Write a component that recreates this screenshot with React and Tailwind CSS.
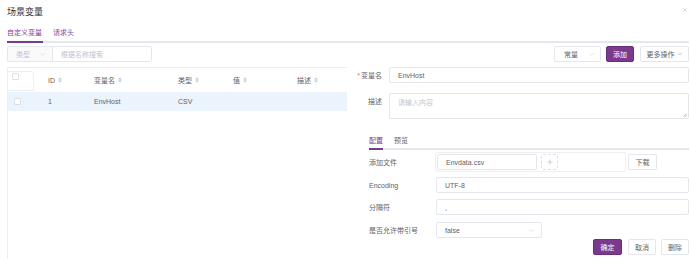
import { ChevronDown, X, Plus } from 'lucide-react'

const purple = 'bg-[#7b3a8d]'

const SortIcon = () => (
  <svg width="4" height="6" viewBox="0 0 4 6" className="ml-[3px] inline-block">
    <path d="M0 2.4 L2 0.4 L4 2.4 Z" fill="#c0c4cc" />
    <path d="M0 3.6 L2 5.6 L4 3.6 Z" fill="#c0c4cc" />
  </svg>
)

const Checkbox = () => (
  <span className="block w-[7px] h-[7px] border border-[#dcdfe6] rounded-[1px] bg-white" />
)

const columns = [
  { key: 'id', label: 'ID', width: 'w-[46px]' },
  { key: 'name', label: '变量名', width: 'w-[84px]' },
  { key: 'type', label: '类型', width: 'w-[55px]' },
  { key: 'value', label: '值', width: 'w-[64px]' },
  { key: 'desc', label: '描述', width: 'flex-1' }
]

const rows = [{ id: '1', name: 'EnvHost', type: 'CSV', value: '', desc: '' }]

const Input = ({ value, placeholder, className = '' }) => (
  <div className={`h-[16px] border border-[#e4e7ed] rounded-[2px] bg-white flex items-center px-[8px] ${className}`}>
    {value ? <span className="text-[#606266]">{value}</span> : <span className="text-[#c0c4cc]">{placeholder}</span>}
  </div>
)

const Btn = ({ children, primary, className = '' }) => (
  <div
    className={`h-[16px] flex items-center justify-center rounded-[2px] ${
      primary ? `${purple} text-white border border-[#6a2f7c]` : 'bg-white border border-[#e4e7ed] text-[#606266]'
    } ${className}`}
  >
    {children}
  </div>
)

export default function App() {
  return (
    <div
      className="w-[690px] h-[259px] bg-white overflow-hidden pl-[7px] pr-[1px] text-[7px] leading-none text-[#606266]"
      style={{ fontFamily: '"Liberation Sans", "Noto Sans CJK SC", sans-serif' }}
    >
      {/* Header */}
      <div className="h-[24px] flex items-center justify-between">
        <span className="text-[9px] text-[#303133]">场景变量</span>
        <X className="w-[6px] h-[6px] mr-[1px] -mt-[4px] text-[#909399]" strokeWidth={1.5} />
      </div>

      {/* Tabs */}
      <div className="h-[19px] flex items-start border-b-2 border-[#e4e7ed]">
        <div className="h-[19px] -mb-[2px] border-b-2 border-[#7b3a8d] flex items-center text-[#7b3a8d] pr-[1px]">
          自定义变量
        </div>
        <div className="h-[17px] flex items-center ml-[10px] text-[#8a4a9c]">请求头</div>
      </div>

      {/* Toolbar */}
      <div className="mt-[3px] h-[16px] flex items-center justify-between">
        <div className="flex h-[16px]">
          <div className="w-[46px] h-[16px] border border-[#e4e7ed] rounded-l-[2px] bg-[#fafafa] flex items-center justify-between pl-[8px] pr-[6px] text-[#c0c4cc]">
            <span>类型</span>
            <ChevronDown className="w-[7px] h-[7px]" strokeWidth={1.5} />
          </div>
          <div className="w-[99px] h-[16px] border border-l-0 border-[#e4e7ed] rounded-r-[2px] flex items-center pl-[8px] text-[#c0c4cc]">
            根据名称搜索
          </div>
        </div>
        <div className="flex items-center">
          <div className="w-[47px] h-[16px] border border-[#e4e7ed] rounded-[2px] flex items-center justify-between pl-[9px] pr-[5px]">
            <span>常量</span>
            <ChevronDown className="w-[7px] h-[7px] text-[#c0c4cc]" strokeWidth={1.5} />
          </div>
          <Btn primary className="w-[28px] ml-[5px]">添加</Btn>
          <div className="w-[49px] ml-[6px] h-[16px] border border-[#e4e7ed] rounded-[2px] flex items-center justify-center gap-[2px]">
            <span>更多操作</span>
            <ChevronDown className="w-[6px] h-[6px]" strokeWidth={1.5} />
          </div>
        </div>
      </div>

      {/* Main */}
      <div className="mt-[5px] flex gap-[8px]">
        {/* Left table */}
        <div className="w-[340px] h-[192px] border-l border-t border-[#ebeef5]">
          <div className="h-[24px] flex items-start">
            <div className="w-[26px] h-[20px] mt-[3px] border border-l-0 border-[#ebeef5] rounded-tr-[3px] pl-[4px] pt-[1px]">
              <Checkbox />
            </div>
            {columns.map(c => (
              <div key={c.key} className={`${c.width} h-[24px] pl-[14px] flex items-center text-[#606266]`}>
                {c.label}
                <SortIcon />
              </div>
            ))}
          </div>
          {rows.map(r => (
            <div key={r.id} className="h-[19px] flex items-center bg-[#ebf4fd]">
              <div className="w-[26px] pl-[6px]">
                <Checkbox />
              </div>
              {columns.map(c => (
                <div key={c.key} className={`${c.width} pl-[14px] text-[#606266]`}>
                  {r[c.key]}
                </div>
              ))}
            </div>
          ))}
        </div>

        {/* Right form */}
        <div className="flex-1">
          <div className="flex items-center">
            <label className="w-[34px] pr-[7px] text-right">
              <span className="text-[#f56c6c] mr-[1px]">*</span>变量名
            </label>
            <Input value="EnvHost" className="flex-1" />
          </div>
          <div className="mt-[10px] flex items-start">
            <label className="w-[34px] pr-[7px] text-right pt-[5px]">描述</label>
            <div className="relative flex-1 h-[26px] border border-[#e4e7ed] rounded-[2px] px-[8px] pt-[5px] text-[#c0c4cc]">
              请输入内容
              <svg width="4" height="4" viewBox="0 0 4 4" className="absolute right-[1px] bottom-[1px]">
                <path d="M0.5 3.8 L3.8 0.5 M2 3.8 L3.8 2" stroke="#909399" strokeWidth="0.6" />
              </svg>
            </div>
          </div>

          {/* Sub tabs */}
          <div className="mt-[14px] ml-[14px] h-[17px] flex items-start border-b-2 border-[#e4e7ed]">
            <div className="h-[17px] -mb-[2px] border-b-2 border-[#7b3a8d] flex items-center text-[#7b3a8d]">配置</div>
            <div className="h-[15px] flex items-center ml-[11px] text-[#606266]">预览</div>
          </div>

          <div className="ml-[14px]">
            <div className="mt-[2px] flex items-center">
              <label className="w-[66px]">添加文件</label>
              <div className="w-[191px] h-[20px] border border-[#f0f0f0] rounded-[2px] flex items-center pl-[1px]">
                <Input value="Envdata.csv" className="w-[100px]" />
                <div className="ml-[4px] w-[17px] h-[16px] border border-dashed border-[#dcdfe6] rounded-[2px] flex items-center justify-center">
                  <Plus className="w-[8px] h-[8px] text-[#909399]" strokeWidth={1.2} />
                </div>
              </div>
              <Btn className="w-[29px] ml-[2px]">下载</Btn>
            </div>
            <div className="mt-[5px] flex items-center">
              <label className="w-[67px]">Encoding</label>
              <Input value="UTF-8" className="flex-1" />
            </div>
            <div className="mt-[6px] flex items-center">
              <label className="w-[67px]">分隔符</label>
              <Input value="," className="flex-1" />
            </div>
            <div className="mt-[7px] flex items-center">
              <label className="w-[67px]">是否允许带引号</label>
              <div className="w-[106px] h-[16px] border border-[#e4e7ed] rounded-[2px] flex items-center justify-between pl-[8px] pr-[6px]">
                <span>false</span>
                <ChevronDown className="w-[7px] h-[7px] text-[#c0c4cc]" strokeWidth={1.5} />
              </div>
            </div>
            <div className="mt-[1px] flex justify-end">
              <Btn primary className="w-[29px]">确定</Btn>
              <Btn className="w-[28px] ml-[6px]">取消</Btn>
              <Btn className="w-[28px] ml-[5px]">删除</Btn>
            </div>
          </div>
        </div>
      </div>
    </div>
  )
}
